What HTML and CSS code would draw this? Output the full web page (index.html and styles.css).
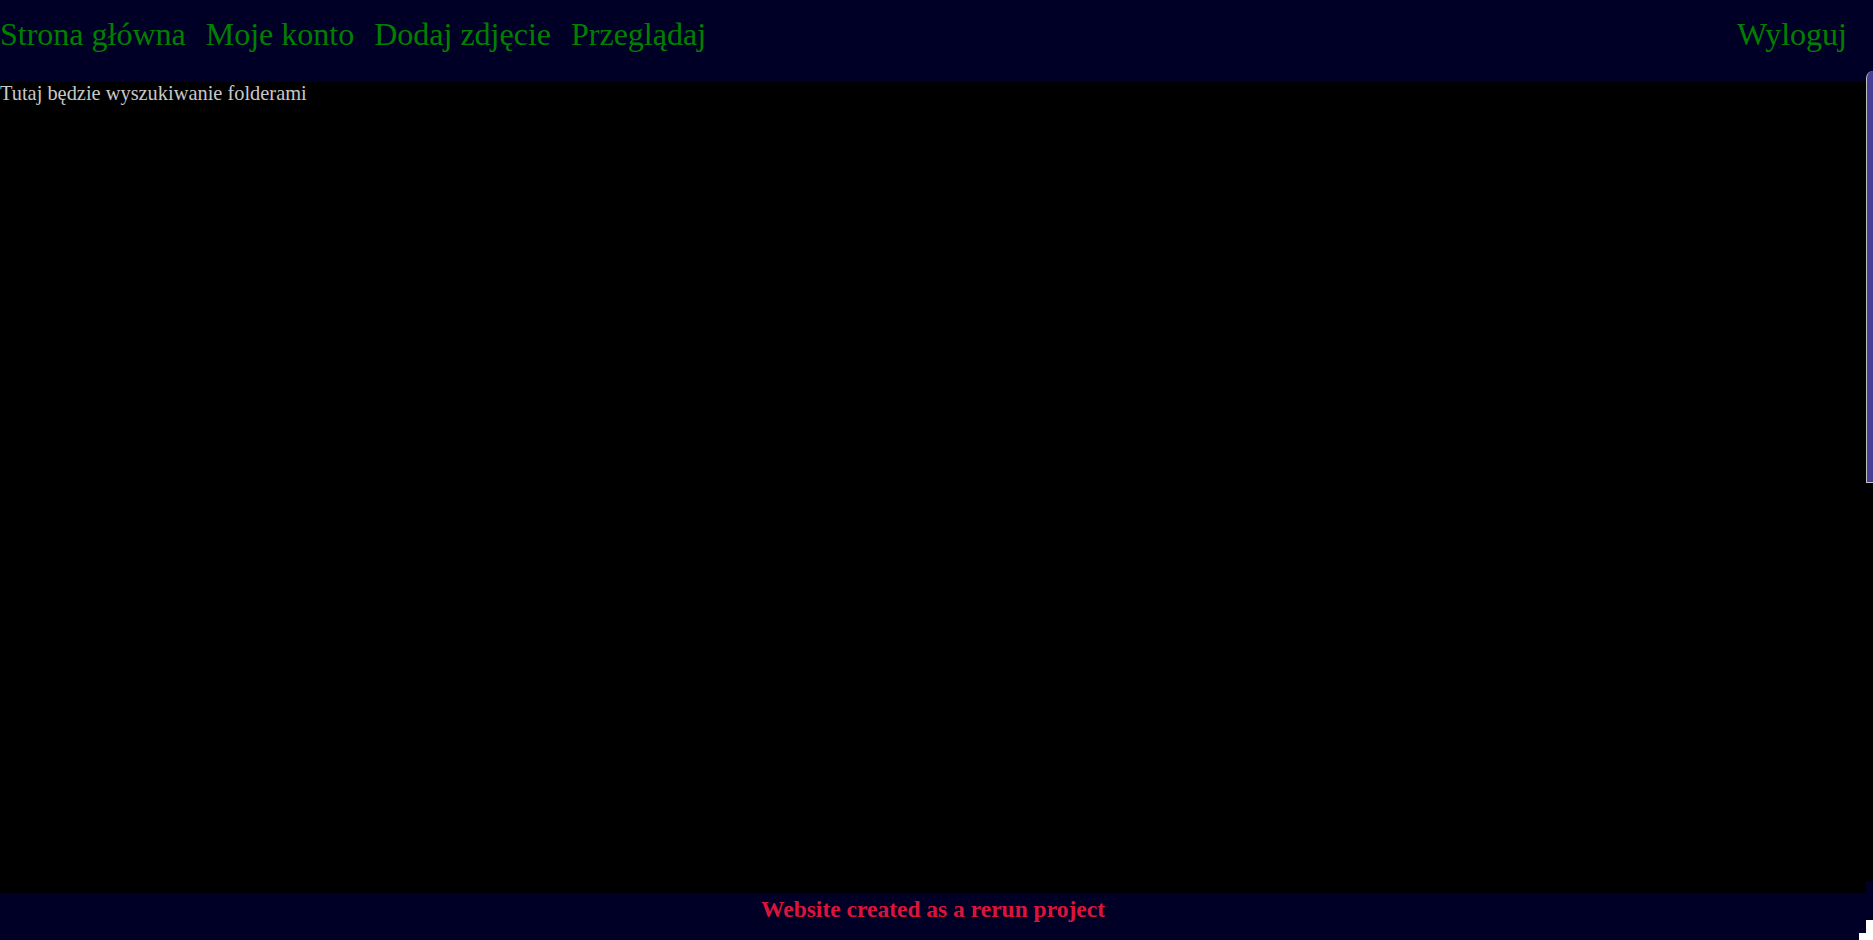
FILE: index.html
```html
<!DOCTYPE html>
<html lang="pl">
<head>
<meta charset="utf-8">
<title>Przeglądaj</title>
<link rel="stylesheet" href="styles.css">
</head>
<body>
<div class="page">
  <header class="topbar">
    <nav class="nav-main">
      <a class="nav-link" href="#">Strona główna</a>
      <a class="nav-link" href="#">Moje konto</a>
      <a class="nav-link" href="#">Dodaj zdjęcie</a>
      <a class="nav-link" href="#">Przeglądaj</a>
    </nav>
    <a class="nav-link logout" href="#">Wyloguj</a>
  </header>
  <main class="content">
    <p class="search-note">Tutaj będzie wyszukiwanie folderami</p>
  </main>
  <footer class="footer">
    <p class="footer-text">Website created as a rerun project</p>
  </footer>
</div>
<div class="scroll-thumb"></div>
<div class="corner-navy"></div>
<div class="corner-white"></div>
<div class="corner-white2"></div>
</body>
</html>
```
FILE: styles.css
```css
html, body {
  margin: 0;
  padding: 0;
  height: 100%;
}
body {
  background: #000000;
  font-family: "Liberation Serif", "Times New Roman", serif;
  overflow: hidden;
  position: relative;
}
.page {
  display: flex;
  flex-direction: column;
  height: 940px;
}
.topbar {
  height: 82px;
  box-sizing: border-box;
  background: #000026;
  display: flex;
  align-items: flex-start;
  padding: 16px 26px 0 0;
}
.nav-main {
  display: flex;
  gap: 20px;
}
.nav-link {
  color: #008000;
  text-decoration: none;
  font-size: 32px;
  line-height: 37px;
}
.logout {
  margin-left: auto;
}
.content {
  flex: 1;
}
.search-note {
  margin: 0;
  color: #c8c8c8;
  font-size: 20.4px;
  line-height: 23px;
}
.footer {
  height: 47px;
  background: #000026;
  padding-right: 7px;
  text-align: center;
}
.footer-text {
  margin: 0;
  padding-top: 3px;
  color: #dc143c;
  font-weight: bold;
  font-size: 23.5px;
  line-height: 27px;
}
.scroll-thumb {
  position: absolute;
  right: 0;
  top: 71px;
  width: 6px;
  height: 411px;
  background: #4a3f96;
  border-left: 1px solid #c0c0c0;
  border-top-left-radius: 7px;
  border-bottom: 1px solid #c0c0c0;
}
.corner-navy {
  position: absolute;
  right: 0;
  top: 881px;
  width: 7px;
  height: 12px;
  background: #000026;
}
.corner-white {
  position: absolute;
  right: 0;
  top: 920px;
  width: 7px;
  height: 20px;
  background: #ffffff;
}
.corner-white2 {
  position: absolute;
  right: 7px;
  top: 933px;
  width: 7px;
  height: 7px;
  background: #ffffff;
}
```
